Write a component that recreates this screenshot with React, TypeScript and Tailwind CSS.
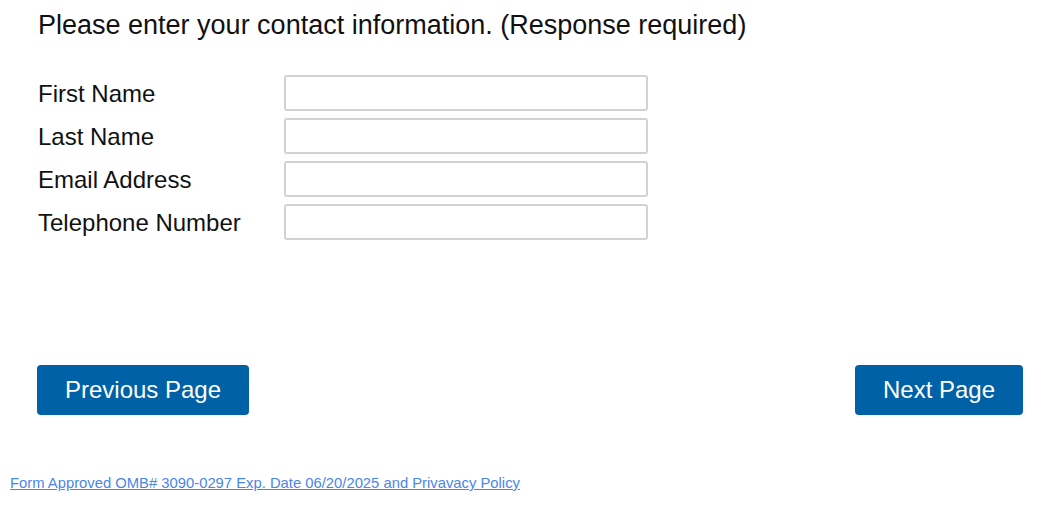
import React from 'react';

const fields = ['First Name', 'Last Name', 'Email Address', 'Telephone Number'];

export default function App() {
  return (
    <div className="w-[1044px] h-[505px] bg-white font-['Liberation_Sans',Arial,sans-serif] text-[#111]">
      <div className="pl-[37px] pr-[21px]">
        <h1 className="ml-[1px] pt-[10px] text-[27px] leading-[30px]">
          Please enter your contact information. (Response required)
        </h1>

        {/* Contact fields */}
        <div className="ml-[1px] mt-[35px] flex flex-col gap-[7px]">
          {fields.map((label) => (
            <div key={label} className="flex items-center">
              <label className="w-[246px] pt-[2px] text-[24px] leading-[28px]">{label}</label>
              <input
                type="text"
                className="w-[364px] h-[36px] border-2 border-[#d2d2d6] rounded-[3px] bg-white outline-none"
              />
            </div>
          ))}
        </div>

        {/* Navigation */}
        <div className="mt-[125px] flex justify-between">
          <button className="h-[50px] w-[212px] rounded-[4px] bg-[#0061a6] text-white text-[24px]">
            Previous Page
          </button>
          <button className="h-[50px] w-[168px] rounded-[4px] bg-[#0061a6] text-white text-[24px]">
            Next Page
          </button>
        </div>
      </div>

      <div className="pl-[10px] mt-[56px]">
        <a href="#" className="text-[14.8px] leading-[16px] text-[#4a86e8] underline">
          Form Approved OMB# 3090-0297 Exp. Date 06/20/2025 and Privavacy Policy
        </a>
      </div>
    </div>
  );
}
